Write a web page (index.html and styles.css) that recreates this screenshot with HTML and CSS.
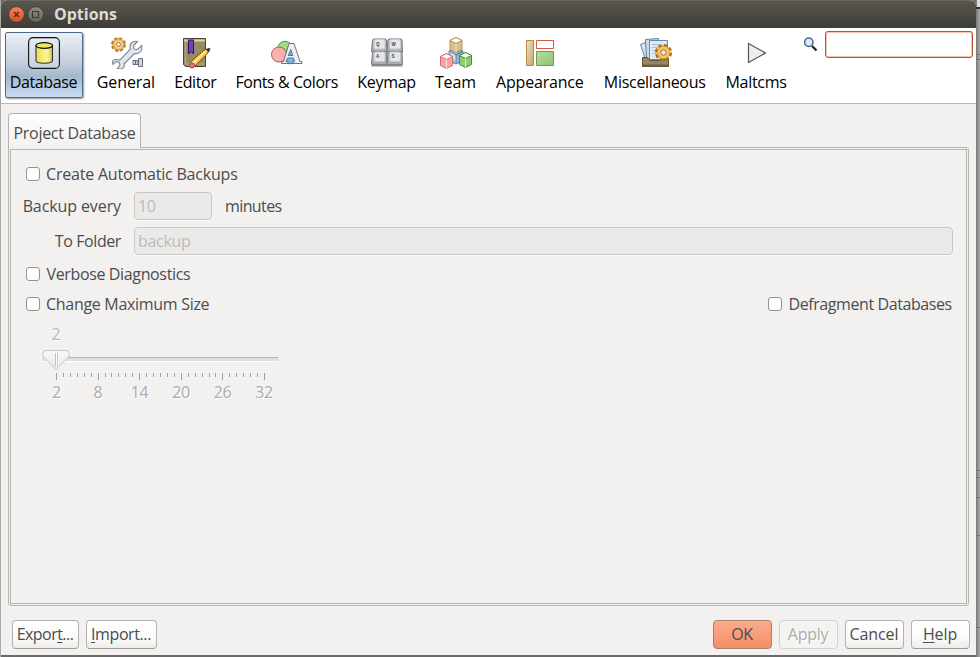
FILE: index.html
```html
<!DOCTYPE html>
<html lang="en">
<head>
<meta charset="utf-8">
<title>Options</title>
<link rel="stylesheet" href="styles.css">
</head>
<body>
<div class="window">
  <header class="titlebar">
    <svg class="controls" width="44" height="28" viewBox="0 0 44 28">
      <defs><linearGradient id="close" x2="0" y2="1"><stop stop-color="#f58461"/><stop offset="1" stop-color="#df4b1d"/></linearGradient><linearGradient id="max" x2="0" y2="1"><stop stop-color="#918e83"/><stop offset="1" stop-color="#66645b"/></linearGradient></defs>
      <circle cx="15.500" cy="14.500" r="7.800" fill="url(#close)" stroke="#33312c" stroke-width=".6"/>
      <path d="M13 12l5 5m0-5l-5 5" stroke="#4d2b1c" stroke-width="1.400"/>
      <circle cx="34.700" cy="14.500" r="7.800" fill="url(#max)" stroke="#33312c" stroke-width=".6"/>
      <path d="M31.500 11.500h6v6h-6z" fill="none" stroke="#393832" stroke-width="1.200"/>
    </svg>
    <h1>Options</h1>
  </header>
  <nav class="toolbar">
    <div class="item selected"><svg width="32" height="32" viewBox="0 0 32 32"><defs><linearGradient id="cyl"><stop stop-color="#e2dc58"/><stop offset=".35" stop-color="#f7ee68"/><stop offset=".7" stop-color="#f9f3a0"/><stop offset="1" stop-color="#c9bf4a"/></linearGradient></defs><rect x=".6" y=".6" width="30.800" height="30.800" rx="4.500" fill="#e6eaf1" fill-opacity=".3" stroke="#111" stroke-width="1.100"/><path d="M8 8.500v15c0 3.700 16.500 3.700 16.500 0v-15" fill="url(#cyl)" stroke="#333" stroke-width="1.100"/><ellipse cx="16.200" cy="8.500" rx="8.300" ry="2.800" fill="#f0e95f" stroke="#111" stroke-width="1.200"/></svg><span>Database</span></div>
    <div class="item"><svg width="32" height="32" viewBox="0 0 32 32"><circle cx="7.500" cy="7.500" r="6.500" fill="#edbd68" stroke="#b57b2d" stroke-width="1.800" stroke-dasharray="3.100 2"/><circle cx="7.500" cy="7.500" r="4.800" fill="#f8d792" stroke="#d39a4a"/><circle cx="7.500" cy="7.500" r="2" fill="#fff" stroke="#a66d23"/><path d="M5 22.500l4 .5L19.500 12c-2-5 2-8.500 7-7.500l-4 4 .5 3.500 3.500.5 4-4c1.500 5-2 9-7 8L13 27c1.500 4-2 5.500-6.500 4.500L9 28l-1-3-3-.5-3 3c-1-2-.5-5.500 3-5z" fill="#e0e6ee" stroke="#7c8591" stroke-width="1.100"/><path d="M22 23.500h5v4h-5zM27.500 21.500h4v8h-4z" fill="#cbd4df" stroke="#667181"/><path d="M24.500 23v5" stroke="#667181"/></svg><span>General</span></div>
    <div class="item"><svg width="32" height="32" viewBox="0 0 32 32"><path d="M3.500 1.500h22v28h-20l-2-2z" fill="#968b63" stroke="#4c432c"/><path d="M4 3.500h21" stroke="#ddd4ae" stroke-width="2"/><path d="M5.500 5v22h19" fill="none" stroke="#b6ab80"/><path d="M8.500 3h5v14L11 14.500 8.500 17z" fill="#7141bc" stroke="#31176a"/><path d="M12 29l-2-3.500 14-12.500 5-1.500-1.500 5L14 30z" fill="#f8c646" stroke="#775021"/><path d="M12.500 26.500L26 14" stroke="#fff0a5" stroke-width="1.500"/><path d="M26 12.500l4.500-1.500-1.500 4.500z" fill="#332c21"/><circle cx="12" cy="28.500" r="2.500" fill="#f16b79" stroke="#a94350"/></svg><span>Editor</span></div>
    <div class="item"><svg width="32" height="32" viewBox="0 0 32 32"><circle cx="14" cy="11.500" r="7.300" fill="#a1dc88" stroke="#529c41"/><circle cx="19" cy="19.500" r="7.300" fill="#79b8e8" stroke="#3274ae"/><circle cx="8" cy="17.500" r="7.500" fill="#f9b0ab" fill-opacity=".94" stroke="#b85552"/><path fill-rule="evenodd" d="M18 6.500h5l6 18h2v2h-9v-2h1.500l-1-3.500h-6l-1.500 3.500h2v2h-6.500v-2h2zm-.8 12h4.600l-2-6z" fill="#edf1f7" stroke="#5b6878" stroke-width=".9"/></svg><span>Fonts &amp; Colors</span></div>
    <div class="item"><svg width="32" height="32" viewBox="0 0 32 32"><g stroke="#777b80"><g id="key"><path d="M1.500 3l1-1h12l1 1 .5 12H.5z" fill="#a9acb0"/><rect x="3" y="2.500" width="11" height="9.500" rx="1.500" fill="#e4e6e9" stroke="#c6c8cc"/></g><use href="#key" x="15.500"/><use href="#key" y="12.500"/><use href="#key" x="15.500" y="12.500"/></g><path d="M.5 27.500h31v2H.5z" fill="#8c9095"/><g class="keys"><text x="5" y="8.500">Q</text><text x="20.500" y="8.500">W</text><text x="5" y="20.500">A</text><text x="20.500" y="20.500">S</text></g></svg><span>Keymap</span></div>
    <div class="item"><svg width="32" height="32" viewBox="0 0 32 32"><g fill="#8fb6d8" stroke="#5787b0"><path d="M9 14l7-3 7 3v10l-7 3-7-3z"/><path d="M9 14l7 4 7-4-7 4v9" fill="#d4e4f2"/></g><g fill="#d9c18b" stroke="#b08f50"><path d="M10 3.500l6-3 6 3v9l-6 3-6-3z"/><path d="M10 3.500l6 3 6-3-6-3z" fill="#fffdf5"/><path d="M16 6.500v9" stroke="#efe2bf"/></g><g fill="#faa3a1" stroke="#dc6b6b"><path d="M.5 19.500l6-3 6 3v9l-6 3-6-3z"/><path d="M.5 19.500l6 3 6-3-6-3z" fill="#fff5f3"/><path d="M6.500 22.500v9" stroke="#ffe0dc"/></g><g fill="#90ca74" stroke="#4e8b33"><path d="M19.500 18.500l6-3 6 3v9l-6 3-6-3z"/><path d="M19.500 18.500l6 3 6-3-6-3z" fill="#f5fff0"/><path d="M25.500 21.500v9" stroke="#d7f2ca"/></g></svg><span>Team</span></div>
    <div class="item"><svg width="32" height="32" viewBox="0 0 32 32"><defs><linearGradient id="tan" y2="1"><stop stop-color="#efe2c4"/><stop offset="1" stop-color="#c7a365"/></linearGradient><linearGradient id="green" y2="1"><stop stop-color="#b8dda0"/><stop offset="1" stop-color="#8fc36e"/></linearGradient></defs><path d="M2.500 3.500h7v25h-7z" fill="url(#tan)" stroke="#b58b3f"/><path d="M12.500 3.500h17v8h-17z" fill="#fff" stroke="#d65345"/><path d="M12.500 14.500h17v14h-17z" fill="url(#green)" stroke="#719e42"/></svg><span>Appearance</span></div>
    <div class="item"><svg width="32" height="32" viewBox="0 0 32 32"><path d="M.5 7.500l5-2 5 16-5 1z" fill="#d7e2ed" stroke="#65829e"/><path d="M5.500 2.500l13-1 1 20h-13z" fill="#c8dbed" stroke="#60819e"/><path d="M9.500 3.500h18v19h-18z" fill="#dfeaf5" stroke="#6989a6"/><path d="M12 7.500h9m-9 3h6m-6 3h4m-4 3h4" stroke="#aabfd2"/><path d="M2.500 20.500h5l2 3h10l2-1h7v7h-26z" fill="#968763" stroke="#5f5132"/><path d="M3 28.500h25" stroke="#6b5e41" stroke-width="2"/><circle cx="23.500" cy="15.500" r="7.500" fill="none" stroke="#b06c1c" stroke-width="2.200" stroke-dasharray="3.900 1.990"/><circle cx="23.500" cy="15.500" r="6.300" fill="#f7c464" stroke="#c5852c" stroke-width=".8"/><circle cx="23.500" cy="15.500" r="2.700" fill="#e9edf2" stroke="#ac691b"/></svg><span>Miscellaneous</span></div>
    <div class="item"><svg width="32" height="32" viewBox="0 0 32 32"><path d="M7.500 6.500v19l17-9.500z" fill="#eee" stroke="#555" stroke-width="1.200"/></svg><span>Maltcms</span></div>
    <svg class="lens" width="16" height="16" viewBox="0 0 16 16"><path d="M9 9l4.500 4.500" stroke="#222" stroke-width="2.300"/><circle cx="5.800" cy="5.300" r="4.200" fill="#d8eaff" stroke="#4d6680" stroke-width="1.500"/></svg>
    <input class="search" aria-label="Search">
  </nav>
  <main>
    <div class="tab"><span>Project Database</span></div>
    <section class="panel"><div class="inner">
      <label class="check create"><i></i><span>Create Automatic Backups</span></label>
      <div class="field every"><label>Backup every</label><div class="input small">10</div><span class="minutes">minutes</span></div>
      <div class="field folder"><label>To Folder</label><div class="input">backup</div></div>
      <label class="check verbose"><i></i><span>Verbose Diagnostics</span></label>
      <div class="row"><label class="check change"><i></i><span>Change Maximum Size</span></label><label class="check defrag"><i></i><span>Defragment Databases</span></label></div>
      <div class="value">2</div>
      <svg class="slider" width="240" height="34" viewBox="0 0 240 34"><defs><linearGradient id="knob" x2="0" y2="1"><stop stop-color="#f8f8f7"/><stop offset="1" stop-color="#e8e8e7"/></linearGradient></defs><rect x="0" y="9" width="237" height="4" rx="2" fill="#e0dfdd"/><path d="M1 9.500h235.500" stroke="#b8b7b5"/><path d="M2 13.500h234" stroke="#fff"/><path d="M5 2.500h18q4.500 0 4.500 4-1 3-4.500 6l-9 9-9-9q-3.500-3-4.500-6 0-4 4.500-4z" fill="url(#knob)" stroke="#c6c5c3"/><path d="M13.500 5v13m2-13v13" stroke="#c0bfbd"/><path d="M14.500 5v13m2-13v13" stroke="#fff"/><path d="M14.500 25v7m42-7v7m41-7v7m42-7v7m41-7v7m42-7v7" stroke="#a0a09e"/><path d="M21.500 25v4m7-4v4m7-4v4m7-4v4m7-4v4m14-4v4m6-4v4m7-4v4m7-4v4m7-4v4m14-4v4m7-4v4m7-4v4m7-4v4m7-4v4m14-4v4m7-4v4m7-4v4m7-4v4m6-4v4m14-4v4m7-4v4m7-4v4m7-4v4m7-4v4" stroke="#a0a09e"/></svg>
      <div class="scale"><span>2</span><span>8</span><span>14</span><span>20</span><span>26</span><span>32</span></div>
    </div></section>
  </main>
  <footer><button class="export"><span>Expor<u>t</u>...</span></button><button class="import"><span><u>I</u>mport...</span></button><div class="spacer"></div><button class="ok"><span>OK</span></button><button class="apply" disabled><span>Apply</span></button><button class="cancel"><span>Cancel</span></button><button class="help"><span><u>H</u>elp</span></button></footer>
</div>
<svg class="backdrop" width="4" height="657" viewBox="0 0 4 657"><path d="M1 0h3v7H1z" fill="#ddd"/><path d="M0 8h4" stroke="#333" stroke-width="2"/><path d="M0 54.500h4M0 59.500h4M0 470.500h4M0 477.500h4M0 497.500h4M0 535.500h4M0 627.500h4" stroke="#777"/></svg>
</body>
</html>
```
FILE: styles.css
```css
* { box-sizing: border-box; }
body { margin: 0; width: 980px; height: 657px; display: flex; overflow: hidden; padding-left: 1px; background: linear-gradient(90deg, #aaa 0 1px, transparent 1px 976px, #777 976px, #aaa 980px), #6b6a69; font: 16px/22px "Open Sans", "Noto Sans", sans-serif; letter-spacing: -.3px; color: #4c4c4c; }
.window { flex: none; width: 975px; height: 655px; display: flex; flex-direction: column; background: #f2f1f0; border-radius: 6px 6px 0 0; overflow: hidden; }
.backdrop { flex: none; display: block; }
.titlebar { flex: none; height: 28px; display: flex; align-items: center; background: linear-gradient(#59574f, #3d3c38); border-top: 1px solid #6b6961; color: #dfdbd2; }
.controls { margin-top: -1px; margin-right: 9px; }
h1 { margin: 0; font-size: 16px; line-height: 26px; font-weight: 700; letter-spacing: 0; transform: translateY(-1px); }
.toolbar { flex: none; height: 76px; display: flex; align-items: flex-start; padding: 4px 3px 0 4px; background: #fff; border-bottom: 1px solid #b9b8b7; color: #000; }
.item { height: 66px; padding-top: 5px; display: flex; flex-direction: column; align-items: center; white-space: nowrap; line-height: 24px; }
.item svg { display: block; flex: none; margin-bottom: 1px; }
.item:nth-child(1) { width: 78px; margin-right: 4px; letter-spacing: -.35px; }
.item:nth-child(1) span { margin-right: 1px; }
.item:nth-child(2) { width: 78px; letter-spacing: -.1px; }
.item:nth-child(2) svg { margin-left: 2px; }
.item:nth-child(3) { width: 61px; letter-spacing: -.45px; }
.item:nth-child(3) svg { margin-left: 2px; }
.item:nth-child(4) { width: 122px; letter-spacing: -.43px; }
.item:nth-child(5) { width: 78px; }
.item:nth-child(6) { width: 60px; letter-spacing: -.1px; }
.item:nth-child(6) svg { margin-left: 2px; }
.item:nth-child(7) { width: 109px; letter-spacing: -.2px; }
.item:nth-child(7) svg { margin-left: 1px; }
.item:nth-child(8) { width: 121px; }
.item:nth-child(8) svg { margin-left: 2px; }
.item:nth-child(9) { width: 81px; padding-left: 1px; }
.item:nth-child(9) svg { margin-left: 1px; }
.selected { padding-top: 4px; border: 1px solid #4b6885; border-radius: 2px; background: linear-gradient(#ecf0f8, #c5d0de 45%, #a4b8cb 68%, #c8dcf4); box-shadow: 1px 1px 2px #999; }
.keys { font: bold 4.5px "Liberation Sans", sans-serif; letter-spacing: 0; fill: #444; }
.lens { margin: 5px 6px 0 7px; flex: none; }
.search { width: 148px; height: 27px; margin: -1px 0 0; padding: 0 4px; background: #fff; border: 1px solid #bd522e; border-radius: 3px; box-shadow: inset 0 0 0 1px #f5c7b2; outline: 0; }
main { flex: none; padding: 9px 7px 0; display: flex; flex-direction: column; }
.tab { width: 133px; height: 35px; padding: 8px 0 0 4.5px; margin-bottom: -1px; z-index: 1; background: linear-gradient(#fefefe, #f2f1f0); border: 1px solid #b3b2b0; border-bottom: 0; border-radius: 4px 4px 0 0; white-space: nowrap; }
.panel { width: 961px; height: 459px; padding: 1px; border: 1px solid #b5b4ad; border-radius: 0 3px 3px 3px; }
.inner { height: 455px; border: 1px solid #b5b4ad; padding: 13px 13px 0 12px; }
.check { display: flex; align-items: center; height: 22px; margin-left: 3px; white-space: nowrap; }
.check i { width: 14px; height: 14px; margin-right: 6px; background: #fff; border: 1px solid #96938f; border-radius: 3px; }
.create { letter-spacing: -.2px; }
.verbose { letter-spacing: -.36px; }
.defrag { letter-spacing: -.42px; }
.defrag i { margin-right: 6.5px; }
.field { height: 28px; display: flex; align-items: center; white-space: nowrap; }
.field label { width: 98px; margin-right: 13px; display: flex; justify-content: flex-end; }
.every label { letter-spacing: -.1px; }
.folder label { letter-spacing: -.4px; }
.every { margin-top: 7px; }
.folder { margin-top: 7px; }
.input { flex: 1; height: 28px; padding: 2px 3px; line-height: 22px; background: #ebeae9; border: 1px solid #c9c8c6; border-radius: 4px; box-shadow: 0 1px #fafafa; color: #bdbbb8; }
.small { flex: 0 0 78px; margin-right: 13px; }
.minutes { letter-spacing: -.6px; }
.verbose { margin-top: 8px; }
.verbose i { margin-right: 6.5px; }
.row { display: flex; justify-content: space-between; margin-top: 8px; padding-right: 1.3px; }
.value { width: 20px; margin: 8px 0 0 23px; text-align: center; color: #b7b6b4; text-shadow: 1px 1px #fff; }
.slider { display: block; margin: 2px 0 0 19px; transform: translateY(1px); }
.scale { width: 250px; display: grid; grid-template-columns: repeat(6, 41.5px); margin: 0 0 0 12.8px; text-align: center; color: #acaba9; text-shadow: 1px 1px #fff; }
footer { flex: none; height: 49px; padding: 14px 6px 0 11px; display: flex; align-items: flex-start; }
button { height: 29px; padding: 0 1px 2px 0; display: flex; justify-content: center; align-items: center; font: inherit; letter-spacing: inherit; white-space: nowrap; color: #4c4c4c; background: linear-gradient(#fff, #fbfbfb 60%, #edecea); border: 1px solid #b5b1ac; border-bottom-color: #9d9994; border-radius: 4px; }
button u { text-underline-offset: 2px; }
.spacer { flex: 1; }
.export { width: 67px; margin-right: 7px; letter-spacing: -.55px; }
.import { width: 71px; letter-spacing: -.4px; }
.ok { width: 59px; margin-right: 7px; background: linear-gradient(#fbab8d, #f58e67); border-color: #a8816f; }
.apply { width: 59px; margin-right: 7px; color: #acaba9; text-shadow: 1px 1px #fff; border-color: #d3d2d0; background: #f4f3f2; }
.cancel { width: 59px; margin-right: 7px; letter-spacing: -.1px; }
.help { width: 59px; letter-spacing: -.1px; }
```
